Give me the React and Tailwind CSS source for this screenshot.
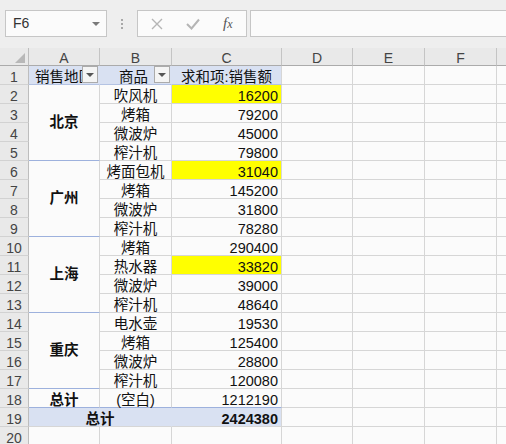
import React from 'react';

const data = [
  ['吹风机', '16200', true],
  ['烤箱', '79200', false],
  ['微波炉', '45000', false],
  ['榨汁机', '79800', false],
  ['烤面包机', '31040', true],
  ['烤箱', '145200', false],
  ['微波炉', '31800', false],
  ['榨汁机', '78280', false],
  ['烤箱', '290400', false],
  ['热水器', '33820', true],
  ['微波炉', '39000', false],
  ['榨汁机', '48640', false],
  ['电水壶', '19530', false],
  ['烤箱', '125400', false],
  ['微波炉', '28800', false],
  ['榨汁机', '120080', false],
  ['(空白)', '1212190', false],
];

const groups = { 0: '北京', 4: '广州', 8: '上海', 12: '重庆' };

const rowHead =
  'bg-[#e9e9e9] border-r border-b border-r-[#bdbdbd] border-b-[#d2d2d2] text-[#444] text-center text-[14px] leading-[23px]';
const cell = 'border-r border-b border-[#d6d6d6] whitespace-nowrap leading-[23px]';

function Empties() {
  return (
    <>
      <div className={cell} />
      <div className={cell} />
      <div className={cell} />
      <div className="border-b border-[#d6d6d6]" />
    </>
  );
}

function DropBtn() {
  return (
    <div className="absolute right-[1px] top-0 w-[16px] h-[17px] border border-[#ababab] bg-[#f4f4f4] flex items-center justify-center">
      <svg width="8" height="4" viewBox="0 0 8 4">
        <polygon points="0,0 8,0 4,4" fill="#555" />
      </svg>
    </div>
  );
}

export default function App() {
  return (
    <div className="w-[506px] h-[444px] overflow-hidden bg-[#fbfbfb] text-[#111] font-['Liberation_Sans','Noto_Sans_CJK_SC',sans-serif] text-[14.5px]">
      {/* toolbar */}
      <div className="h-[48px] bg-[#eeeeee] flex items-start pt-[10px] pl-[5px] overflow-hidden">
        <div className="shrink-0 w-[102px] h-[27px] border border-[#c6c6c6] bg-[#fbfbfb] flex items-center justify-between pl-[7px] pr-[6px]">
          <span className="text-[14px] text-[#333]">F6</span>
          <svg width="8" height="4" viewBox="0 0 8 4">
            <polygon points="0,0 8,0 4,4" fill="#7a7a7a" />
          </svg>
        </div>
        <div className="shrink-0 w-[30px] h-[27px] flex flex-col items-center justify-center gap-[2px]">
          <div className="w-[2px] h-[2px] bg-[#a8a8a8]" />
          <div className="w-[2px] h-[2px] bg-[#a8a8a8]" />
          <div className="w-[2px] h-[2px] bg-[#a8a8a8]" />
        </div>
        <div className="shrink-0 w-[110px] h-[27px] border border-[#c6c6c6] bg-[#fbfbfb] flex items-center pl-[13px]">
          <svg width="12" height="12" viewBox="0 0 12 12" className="shrink-0">
            <path d="M1 1 L11 11 M11 1 L1 11" stroke="#b5b5b5" strokeWidth="1.4" fill="none" />
          </svg>
          <svg width="14" height="12" viewBox="0 0 14 12" className="shrink-0 ml-[23px]">
            <path d="M1 6 L5.5 10.5 L13 1.5" stroke="#b5b5b5" strokeWidth="2" fill="none" />
          </svg>
          <span className="ml-[23px] font-['Liberation_Serif',serif] italic text-[15px] text-[#555] leading-none">
            f<span className="text-[12px]">x</span>
          </span>
        </div>
        <div className="shrink-0 ml-[3px] w-[270px] h-[27px] border border-[#c6c6c6] bg-[#fbfbfb]" />
      </div>

      {/* grid */}
      <div className="grid grid-cols-[29px_71px_72px_110px_71px_72px_72px_1fr] grid-rows-[18px_repeat(20,19px)]">
        {/* column headers */}
        <div className="bg-[#e9e9e9] border-r border-b border-r-[#bdbdbd] border-b-[#ababab] relative">
          <svg width="29" height="18" viewBox="0 0 29 18" className="absolute left-0 top-0">
            <polygon points="25,5 25,15 15,15" fill="#b8b8b8" />
          </svg>
        </div>
        {['A', 'B', 'C', 'D', 'E', 'F'].map((l) => (
          <div
            key={l}
            className="bg-[#e9e9e9] border-r border-b border-r-[#c4c4c4] border-b-[#ababab] text-center text-[14px] text-[#444] leading-[21px]"
          >
            {l}
          </div>
        ))}
        <div className="bg-[#e9e9e9] border-b border-b-[#ababab]" />

        {/* row 1 */}
        <div className={rowHead}>1</div>
        <div className="relative bg-[#d9e1f2] border-r border-b border-r-[#d9e1f2] border-b-[#b4c3e3] text-center leading-[23px] whitespace-nowrap overflow-hidden">
          销售地区
          <DropBtn />
        </div>
        <div className="relative bg-[#d9e1f2] border-r border-b border-r-[#d9e1f2] border-b-[#b4c3e3] text-center leading-[23px] whitespace-nowrap">
          <span className="pr-[4px]">商品</span>
          <DropBtn />
        </div>
        <div className="bg-[#d9e1f2] border-r border-b border-r-[#d6d6d6] border-b-[#b4c3e3] text-center leading-[23px] whitespace-nowrap">
          求和项:销售额
        </div>
        <Empties />

        {/* data rows */}
        {data.map(([name, val, yellow], i) => {
          const last = i === 16;
          return (
            <React.Fragment key={i}>
              <div className={rowHead}>{i + 2}</div>
              {groups[i] !== undefined && (
                <div className="row-span-4 border-r border-b border-r-[#d6d6d6] border-b-[#9db1dd] flex items-center justify-center font-bold leading-none">
                  {groups[i]}
                </div>
              )}
              {last && (
                <div className="border-r border-b border-r-[#d6d6d6] border-b-[#9db1dd] text-center font-bold leading-[23px]">
                  总计
                </div>
              )}
              <div
                className={
                  last
                    ? 'border-r border-b border-r-[#d6d6d6] border-b-[#9db1dd] text-center leading-[23px] whitespace-nowrap'
                    : 'border-r border-b border-[#d6d6d6] text-center leading-[23px] whitespace-nowrap'
                }
              >
                {name}
              </div>
              <div
                className={
                  (yellow ? 'bg-[#ffff00] ' : '') +
                  (last
                    ? 'border-r border-b border-r-[#d6d6d6] border-b-[#9db1dd] text-right pr-[3px] leading-[23px]'
                    : 'border-r border-b border-[#d6d6d6] text-right pr-[3px] leading-[23px]')
                }
              >
                {val}
              </div>
              <Empties />
            </React.Fragment>
          );
        })}

        {/* row 19 */}
        <div className={rowHead}>19</div>
        <div className="col-span-2 bg-[#d9e1f2] border-r border-b border-r-[#d9e1f2] border-b-[#d6d6d6] text-center font-bold leading-[23px]">
          总计
        </div>
        <div className="bg-[#d9e1f2] border-r border-b border-r-[#d6d6d6] border-b-[#d6d6d6] text-right pr-[3px] font-bold leading-[23px]">
          2424380
        </div>
        <Empties />

        {/* row 20 */}
        <div className={rowHead}>20</div>
        <div className={cell} />
        <div className={cell} />
        <div className={cell} />
        <Empties />
      </div>
    </div>
  );
}
